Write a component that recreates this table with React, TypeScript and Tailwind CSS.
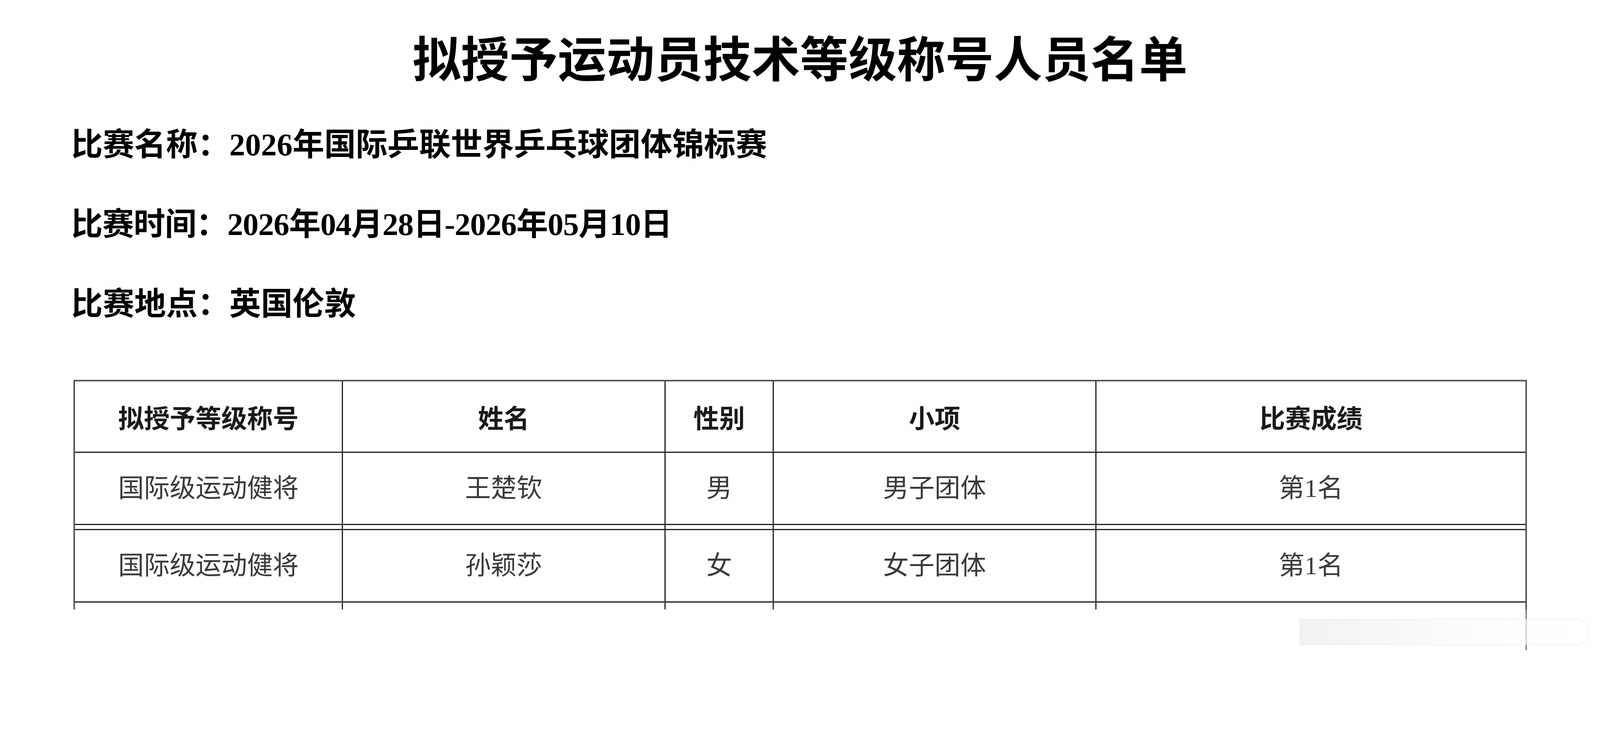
import React from "react";

const cols = "grid grid-cols-[686px_826px_277px_826px_1098px]";

const header = ["拟授予等级称号", "姓名", "性别", "小项", "比赛成绩"];

const rows = [
  ["国际级运动健将", "王楚钦", "男", "男子团体", "第1名"],
  ["国际级运动健将", "孙颖莎", "女", "女子团体", "第1名"],
];

const cjk = { fontFamily: '"Liberation Serif", "Noto Sans CJK SC", serif' };
const sans = { fontFamily: '"Noto Sans CJK SC", "Noto Sans", sans-serif' };

function Cell({ children, last }: { children?: React.ReactNode; last?: boolean }) {
  return (
    <div className={`flex items-center justify-center ${last ? "" : "border-r-[3px] border-[#1e1e1e]"}`}>
      {children}
    </div>
  );
}

export default function App() {
  return (
    <div className="relative w-full h-screen overflow-hidden bg-white text-black">
      {/* title */}
      <div className="pt-[81px] flex justify-center">
        <h1 className="text-[124px] leading-none font-bold" style={sans}>
          拟授予运动员技术等级称号人员名单
        </h1>
      </div>

      {/* meta lines */}
      <div className="mt-[126px] pl-[182px] flex flex-col gap-[123px] text-[81px] leading-none font-semibold" style={cjk}>
        <p>比赛名称：2026年国际乒联世界乒乓球团体锦标赛</p>
        <p className="tracking-[-1px]">比赛时间：2026年04月28日-2026年05月10日</p>
        <p>比赛地点：英国伦敦</p>
      </div>

      {/* table */}
      <div className="mt-[153px] ml-[188px] w-[3721px] border-x-4 border-[#555555]">
        <div className="border-t-4 border-[#555555]" />
        <div className={`${cols} h-[183px] border-b-[3px] border-[#1e1e1e]`}>
          {header.map((h, i) => (
            <Cell key={h} last={i === header.length - 1}>
              <span className="text-[66px] leading-none font-bold text-[#1a1a1a]" style={sans}>
                {h}
              </span>
            </Cell>
          ))}
        </div>

        {rows.map((r, ri) => (
          <React.Fragment key={ri}>
            <div
              className={`${cols} ${ri === 0 ? "h-[185px] border-b-[3px] border-[#1e1e1e]" : "h-[186px] border-b-4 border-[#444444]"}`}
            >
              {r.map((c, i) => (
                <Cell key={i} last={i === r.length - 1}>
                  <span className="text-[66px] leading-none text-[#3a3a3a]" style={cjk}>
                    {c}
                  </span>
                </Cell>
              ))}
            </div>
            {ri === 0 && (
              <div className={`${cols} h-[13px] border-b-[3px] border-[#1e1e1e]`}>
                {r.map((_, i) => (
                  <Cell key={i} last={i === r.length - 1} />
                ))}
              </div>
            )}
          </React.Fragment>
        ))}

        {/* cut-off third row */}
        <div className={`${cols} h-[17px]`}>
          {header.map((_, i) => (
            <Cell key={i} last={i === header.length - 1} />
          ))}
        </div>
      </div>
      {/* right border keeps going a little below the cut */}
      <div className="ml-[188px] w-[3721px] h-[105px] border-r-4 border-[#8a8a8a]" />

      {/* faint overlay bar at bottom right */}
      <div className="absolute left-[3327px] top-[1586px] w-[741px] h-[66px] rounded-r-[36px] border border-[#e4e4e4] bg-gradient-to-r from-[#f0f0f0]/90 via-[#fafafa]/70 to-white/60" />
    </div>
  );
}
